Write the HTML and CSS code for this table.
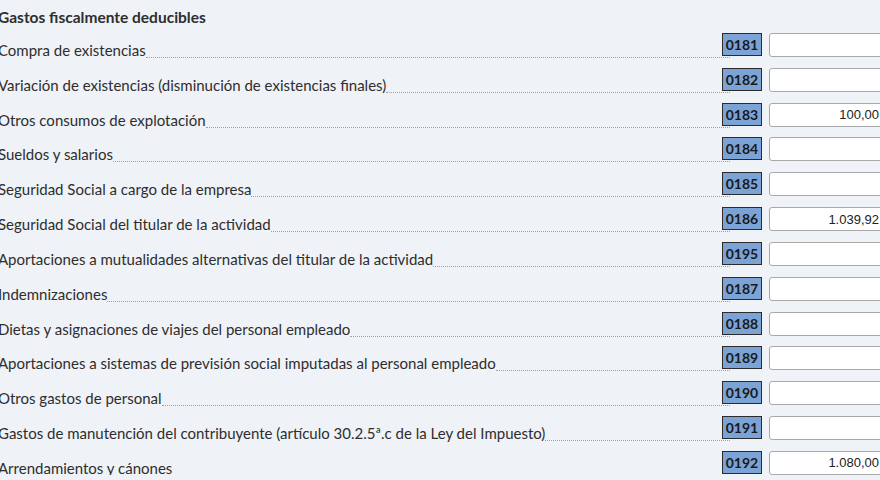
FILE: index.html
```html
<!DOCTYPE html>
<html lang="es">
<head>
<meta charset="utf-8">
<link rel="stylesheet" href="styles.css">
</head>
<body>
<div class="form">
  <div class="heading">Gastos fiscalmente deducibles</div>
  <div class="rows">
    <div class="row"><div class="label"><span class="txt">Compra de existencias</span><span class="leader"></span></div><div class="code">0181</div><input class="amount" type="text" value=""></div>
    <div class="row"><div class="label"><span class="txt">Variación de existencias (disminución de existencias finales)</span><span class="leader"></span></div><div class="code">0182</div><input class="amount" type="text" value=""></div>
    <div class="row"><div class="label"><span class="txt">Otros consumos de explotación</span><span class="leader"></span></div><div class="code">0183</div><input class="amount" type="text" value="100,00"></div>
    <div class="row"><div class="label"><span class="txt">Sueldos y salarios</span><span class="leader"></span></div><div class="code">0184</div><input class="amount" type="text" value=""></div>
    <div class="row"><div class="label"><span class="txt">Seguridad Social a cargo de la empresa</span><span class="leader"></span></div><div class="code">0185</div><input class="amount" type="text" value=""></div>
    <div class="row"><div class="label"><span class="txt">Seguridad Social del titular de la actividad</span><span class="leader"></span></div><div class="code">0186</div><input class="amount" type="text" value="1.039,92"></div>
    <div class="row"><div class="label"><span class="txt">Aportaciones a mutualidades alternativas del titular de la actividad</span><span class="leader"></span></div><div class="code">0195</div><input class="amount" type="text" value=""></div>
    <div class="row"><div class="label"><span class="txt">Indemnizaciones</span><span class="leader"></span></div><div class="code">0187</div><input class="amount" type="text" value=""></div>
    <div class="row"><div class="label"><span class="txt">Dietas y asignaciones de viajes del personal empleado</span><span class="leader"></span></div><div class="code">0188</div><input class="amount" type="text" value=""></div>
    <div class="row"><div class="label"><span class="txt">Aportaciones a sistemas de previsión social imputadas al personal empleado</span><span class="leader"></span></div><div class="code">0189</div><input class="amount" type="text" value=""></div>
    <div class="row"><div class="label"><span class="txt">Otros gastos de personal</span><span class="leader"></span></div><div class="code">0190</div><input class="amount" type="text" value=""></div>
    <div class="row"><div class="label"><span class="txt">Gastos de manutención del contribuyente (artículo 30.2.5ª.c de la Ley del Impuesto)</span><span class="leader"></span></div><div class="code">0191</div><input class="amount" type="text" value=""></div>
    <div class="row"><div class="label"><span class="txt">Arrendamientos y cánones</span><span class="leader"></span></div><div class="code">0192</div><input class="amount" type="text" value="1.080,00"></div>
  </div>
</div>
</body>
</html>
```
FILE: styles.css
```css
html, body {
  margin: 0;
  padding: 0;
  background: #eff2f7;
  overflow: hidden;
}
body {
  font-family: Lato, "Noto Sans", sans-serif;
  color: #2e2e2e;
}
.form {
  margin-left: -2px;
  padding-top: 7px;
}
.heading {
  font-weight: bold;
  font-size: 15.5px;
  line-height: 20px;
  margin-bottom: 6px;
}
.rows {
  display: flex;
  flex-direction: column;
  gap: 10.83px;
}
.row {
  display: flex;
  align-items: flex-start;
  height: 24px;
}
.label {
  flex: 0 0 732px;
  display: flex;
  align-items: flex-end;
  height: 25px;
  font-size: 15px;
}
.txt {
  white-space: nowrap;
  line-height: 15px;
}
.leader {
  flex: 1;
  border-bottom: 1px dotted #a0a0a0;
}
.code {
  flex: 0 0 auto;
  margin-left: -8px;
  margin-right: 7px;
  width: 38px;
  height: 21px;
  border: 1px solid #2b2b2b;
  background: #7ba3d6;
  font-weight: bold;
  font-size: 14px;
  line-height: 21px;
  text-align: center;
  color: #1a1a1a;
}
.amount {
  flex: 0 0 115px;
  box-sizing: border-box;
  width: 115px;
  height: 24px;
  margin: 0;
  padding: 0 4px 0 4px;
  border: 1px solid #a9a9a9;
  border-radius: 3px;
  background: #fff;
  font-family: "Liberation Sans", Arial, sans-serif;
  font-size: 13px;
  color: #222;
  text-align: right;
  outline: none;
}
```
